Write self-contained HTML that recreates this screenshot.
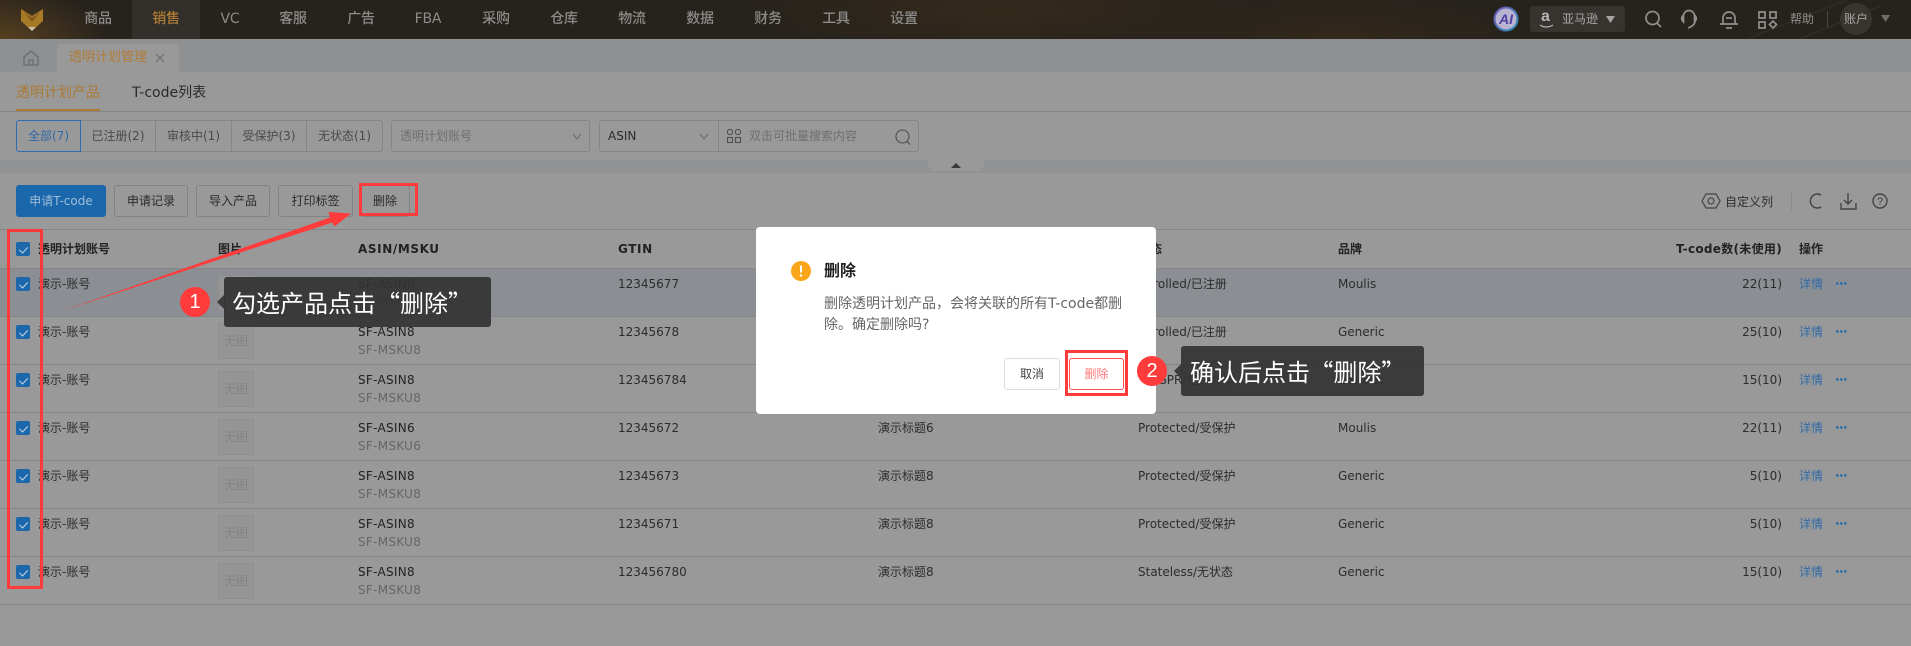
<!DOCTYPE html>
<html lang="zh"><head><meta charset="utf-8"><title>透明计划管理</title>
<style>
*{box-sizing:border-box;margin:0;padding:0}
html,body{width:1911px;height:646px;overflow:hidden;background:#999}
body{position:relative;font:12px/16px "DejaVu Sans","Noto Sans CJK SC",sans-serif;color:#2a2a2a}
.a,.a>*{position:absolute;white-space:nowrap}
.nav{left:0;top:0;width:1911px;height:39px;background:radial-gradient(ellipse 110px 60px at 0 45px,#5c4220,transparent),radial-gradient(ellipse 260px 50px at 1000px 10px,#352a1c,transparent),radial-gradient(ellipse 200px 50px at 1340px 40px,#33281b,transparent),#26221c}
.nav b{top:11px;width:68px;text-align:center;font:500 14px/17px "DejaVu Sans","Noto Sans CJK SC",sans-serif;color:#8c8c8a;letter-spacing:-.2px}
.seg{top:120px;height:32px;border:1px solid #858585;border-left:0;text-align:center;line-height:30px;color:#4a4a4a}
.inp{top:120px;height:32px;border:1px solid #858585;border-radius:3px}
.btn{top:185px;height:32px;border:1px solid #828282;border-radius:3px;text-align:center;line-height:30px;color:#2a2a2a}
.line{left:0;width:1911px;height:1px;background:#858585}
.th{top:241px;font-weight:700;color:#222}
.row{left:0;width:1911px;height:48px}
.row>i{left:0;bottom:-1px;width:1911px;height:1px;background:#858585}
.cb{left:16px;top:9px;width:14px;height:14px;background:#1d68ab;border-radius:2px}
.cb::after{content:"";position:absolute;left:5px;top:2.5px;width:4px;height:7px;border:solid #c9d6e2;border-width:0 1.6px 1.6px 0;transform:rotate(42deg)}
.t{top:8px;color:#2c2c2c}
.acc{left:38px}.asin{left:358px;color:#222;letter-spacing:.3px}.sku{left:358px;top:26px;color:#666;letter-spacing:.3px}
.g{left:618px}.ti{left:878px}.st{left:1138px}.br{left:1338px}
.n{right:129px}.op{left:1799px;color:#2f6aa8!important}
.more{left:1836px;top:14px;width:12px;height:3px;background:radial-gradient(circle at 1.3px 1.5px,#1f6cb0 1.2px,transparent 1.4px) 0 0/4px 3px repeat-x}
.img{left:218px;top:7px;width:36px;height:36px;background:#959595;border:1px solid #8f8f8f;text-align:center;line-height:34px;color:#838383}
</style></head><body>

<div class="a nav">
<svg style="left:1700px;top:0" width="211" height="39" fill="none" stroke="#302d28" stroke-width="1.500"><path d="M47 39 147 0M100 39 180 6"/></svg>
<svg style="left:0;top:0" width="64" height="39"><path d="M21 9 32 16 43 9V21L32 31 21 21Z" fill="#a87a28"/><path d="M24 12 32 18 40 12 32 22Z" fill="#80591a"/><path d="M28 27h8l-4 4z" fill="#c9c3b4"/></svg>
<div style="left:132px;top:0;width:68px;height:39px;background:#33302b"></div>
<b style="left:64px">商品</b><b style="left:132px;color:#b07c35">销售</b><b style="left:196px">VC</b><b style="left:259px">客服</b><b style="left:327px">广告</b><b style="left:394px">FBA</b><b style="left:462px">采购</b><b style="left:530px">仓库</b><b style="left:598px">物流</b><b style="left:666px">数据</b><b style="left:734px">财务</b><b style="left:802px">工具</b><b style="left:870px">设置</b>
<svg style="left:1493px;top:6px" width="26" height="26"><defs><linearGradient id="ai" x1="0" y1="0" x2="1" y2="1"><stop offset="0" stop-color="#6d55b5"/><stop offset="1" stop-color="#2b8fb5"/></linearGradient></defs><circle cx="13" cy="13" r="11.500" fill="#b9b4d2" stroke="url(#ai)" stroke-width="2"/><text x="13" y="18" text-anchor="middle" font-family="Liberation Sans" font-size="14" font-weight="700" font-style="italic" fill="#4f3fa3">AI</text></svg>
<div style="left:1530px;top:6px;width:95px;height:26px;background:#37342f;border-radius:3px"></div>
<span style="left:1541px;top:8px;font:700 16px/18px 'Liberation Sans',sans-serif;color:#b5b5b3">a</span>
<svg style="left:1539px;top:24px" width="16" height="6"><path d="M1 1q6 4 13 0" fill="none" stroke="#b5b5b3" stroke-width="1.200"/></svg>
<span style="left:1562px;top:11px;color:#a9a9a7">亚马逊</span>
<svg style="left:1606px;top:16px" width="10" height="8"><path d="M0 0h9L4.500 7z" fill="#a5a5a3"/></svg>
<svg style="left:1640px;top:6px" width="140" height="28" fill="none" stroke="#8f8f8d" stroke-width="1.700">
<circle cx="12.500" cy="12" r="6.500"/><path d="M17 17l4 4"/>
<path d="M43.500 10a5.500 5.500 0 0 1 11 0M43.500 9q-3.500 3.500 0 7zM54.500 9q3.500 3.500 0 7zM55 16q-1 4-7 6"/>
<path d="M83 18v-6a6 6 0 0 1 12 0v6M80 18h18M86 22h6M86 12h6"/>
<path d="M119 6h6v6h-6zM130 6h6v6h-6zM119 16h6v6h-6zM133 15l3.500 3.500-3.500 3.500-3.500-3.500z"/>
</svg>
<span style="left:1790px;top:11px;color:#8f8f8d">帮助</span>
<div style="left:1827px;top:11px;width:1px;height:16px;background:#4a4742"></div>
<div style="left:1840px;top:3px;width:32px;height:32px;border-radius:50%;background:#38352f"></div>
<span style="left:1844px;top:11px;color:#a5a5a3">账户</span>
<svg style="left:1881px;top:15px" width="10" height="8"><path d="M0 0h9L4.500 7z" fill="#6f6e6b"/></svg>
</div>

<div class="a" style="left:0;top:39px;width:1911px;height:33px;background:#8f9092"></div>
<svg class="a" style="left:22px;top:49px" width="18" height="18" fill="none" stroke="#6f7072" stroke-width="1.500"><path d="M2 8 9 2l7 6v8H2zM7 16v-5h4v5"/></svg>
<div class="a" style="left:57px;top:44px;width:122px;height:28px;background:#999;border-radius:3px 3px 0 0"></div>
<span class="a" style="left:69px;top:50px;font-size:13px;color:#b07c38">透明计划管理</span>
<svg class="a" style="left:155px;top:53px" width="10" height="10" stroke="#6e6e6e" stroke-width="1.100"><path d="M1 1l8 8M9 1 1 9"/></svg>

<span class="a" style="left:16px;top:84px;font-size:14px;line-height:18px;color:#ab7a36">透明计划产品</span>
<span class="a" style="left:132px;top:84px;font-size:14px;line-height:18px;color:#2a2a2a">T-code列表</span>
<div class="a" style="left:16px;top:109px;width:84px;height:2px;background:#ad7b33"></div>
<div class="a line" style="top:111px"></div>

<div class="a seg" style="left:16px;width:65px;border:1px solid #2d6fae;border-radius:3px 0 0 3px;color:#2f6aa8">全部(7)</div>
<div class="a seg" style="left:81px;width:75px">已注册(2)</div>
<div class="a seg" style="left:156px;width:76px">审核中(1)</div>
<div class="a seg" style="left:232px;width:75px">受保护(3)</div>
<div class="a seg" style="left:307px;width:76px;border-radius:0 3px 3px 0">无状态(1)</div>

<div class="a inp" style="left:391px;width:199px"></div>
<span class="a" style="left:400px;top:128px;color:#707070">透明计划账号</span>
<svg class="a" style="left:571px;top:133px" width="12" height="8" fill="none" stroke="#666" stroke-width="1"><path d="M2 1l4 5 4-5"/></svg>
<div class="a inp" style="left:599px;width:320px"></div>
<span class="a" style="left:608px;top:128px;color:#2a2a2a">ASIN</span>
<svg class="a" style="left:698px;top:133px" width="12" height="8" fill="none" stroke="#666" stroke-width="1"><path d="M2 1l4 5 4-5"/></svg>
<div class="a" style="left:718px;top:120px;width:1px;height:32px;background:#858585"></div>
<svg class="a" style="left:726px;top:128px" width="16" height="16" fill="none" stroke="#4f4f4f" stroke-width="1.100"><rect x="1.500" y="1.500" width="5" height="5" rx="2"/><rect x="9.500" y="1.500" width="5" height="5" rx="2"/><rect x="1.500" y="9.500" width="5" height="5"/><rect x="9.500" y="9.500" width="5" height="5"/></svg>
<span class="a" style="left:749px;top:128px;color:#707070">双击可批量搜索内容</span>
<svg class="a" style="left:894px;top:128px" width="18" height="18" fill="none" stroke="#4f4f4f" stroke-width="1.100"><circle cx="8.500" cy="8.500" r="6.500"/><path d="M13 13.500l3 3"/></svg>

<div class="a" style="left:0;top:160px;width:1911px;height:13px;background:#919294"></div>
<svg class="a" style="left:926px;top:160px" width="60" height="12"><path d="M1 0h58l-2 8q-1 3-4 3H7q-3 0-4-3z" fill="#999"/><path d="M25 8l5-5 5 5z" fill="#3a3a3a"/></svg>

<div class="a btn" style="left:16px;width:90px;background:#1b67ab;border-color:#1b67ab;color:#9dbdd8">申请T-code</div>
<div class="a btn" style="left:114px;width:74px">申请记录</div>
<div class="a btn" style="left:196px;width:74px">导入产品</div>
<div class="a btn" style="left:278px;width:75px">打印标签</div>
<div class="a btn" style="left:360px;width:50px">删除</div>

<svg class="a" style="left:1700px;top:190px" width="22" height="22" fill="none" stroke="#444" stroke-width="1.200"><path d="M5 3.500h10l4 7-4 7H5l-4-7z" transform="translate(1 .5)"/><circle cx="11" cy="11" r="3"/></svg>
<span class="a" style="left:1725px;top:194px;color:#2c2c2c">自定义列</span>
<div class="a" style="left:1791px;top:192px;width:1px;height:18px;background:#8a8a8a"></div>
<svg class="a" style="left:1805px;top:190px" width="90" height="22" fill="none" stroke="#444" stroke-width="1.400">
<path d="M16 5a7 7 0 1 0 0 12"/>
<path d="M43 3v11M39 10l4 4 4-4M36 13v6h15v-6"/>
<circle cx="75" cy="11" r="7"/><text x="75" y="15" text-anchor="middle" font-size="11" fill="#444" stroke="none" font-family="Liberation Sans">?</text>
</svg>

<div class="a line" style="top:229px"></div>
<div class="a row" style="top:229px;height:39px"><div class="cb" style="top:13px"></div></div>
<span class="a th" style="left:38px">透明计划账号</span>
<span class="a th" style="left:218px">图片</span>
<span class="a th" style="left:358px;letter-spacing:.6px">ASIN/MSKU</span>
<span class="a th" style="left:618px;letter-spacing:.6px">GTIN</span>
<span class="a th" style="left:1138px">状态</span>
<span class="a th" style="left:1338px">品牌</span>
<span class="a th" style="right:129px;letter-spacing:.3px">T-code数(未使用)</span>
<span class="a th" style="left:1799px">操作</span>

<div class="a row" style="top:268px;background:#8b8e93"><div class="cb"></div><span class="t acc">演示-账号</span><div class="img">无图</div><span class="t asin">SF-ASIN6</span><span class="sku">SF-MSKU6</span><span class="t g">12345677</span><span class="t ti">演示标题6</span><span class="t st">Enrolled/已注册</span><span class="t br">Moulis</span><span class="t n">22(11)</span><span class="t op">详情</span><span class="more"></span><i></i></div>
<div class="a row" style="top:316px"><div class="cb"></div><span class="t acc">演示-账号</span><div class="img">无图</div><span class="t asin">SF-ASIN8</span><span class="sku">SF-MSKU8</span><span class="t g">12345678</span><span class="t ti">演示标题8</span><span class="t st">Enrolled/已注册</span><span class="t br">Generic</span><span class="t n">25(10)</span><span class="t op">详情</span><span class="more"></span><i></i></div>
<div class="a row" style="top:364px"><div class="cb"></div><span class="t acc">演示-账号</span><div class="img">无图</div><span class="t asin">SF-ASIN8</span><span class="sku">SF-MSKU8</span><span class="t g">123456784</span><span class="t ti">演示标题8</span><span class="t st">Ex-GPR/在线样本</span><span class="t br">Generic</span><span class="t n">15(10)</span><span class="t op">详情</span><span class="more"></span><i></i></div>
<div class="a row" style="top:412px"><div class="cb"></div><span class="t acc">演示-账号</span><div class="img">无图</div><span class="t asin">SF-ASIN6</span><span class="sku">SF-MSKU6</span><span class="t g">12345672</span><span class="t ti">演示标题6</span><span class="t st">Protected/受保护</span><span class="t br">Moulis</span><span class="t n">22(11)</span><span class="t op">详情</span><span class="more"></span><i></i></div>
<div class="a row" style="top:460px"><div class="cb"></div><span class="t acc">演示-账号</span><div class="img">无图</div><span class="t asin">SF-ASIN8</span><span class="sku">SF-MSKU8</span><span class="t g">12345673</span><span class="t ti">演示标题8</span><span class="t st">Protected/受保护</span><span class="t br">Generic</span><span class="t n">5(10)</span><span class="t op">详情</span><span class="more"></span><i></i></div>
<div class="a row" style="top:508px"><div class="cb"></div><span class="t acc">演示-账号</span><div class="img">无图</div><span class="t asin">SF-ASIN8</span><span class="sku">SF-MSKU8</span><span class="t g">12345671</span><span class="t ti">演示标题8</span><span class="t st">Protected/受保护</span><span class="t br">Generic</span><span class="t n">5(10)</span><span class="t op">详情</span><span class="more"></span><i></i></div>
<div class="a row" style="top:556px"><div class="cb"></div><span class="t acc">演示-账号</span><div class="img">无图</div><span class="t asin">SF-ASIN8</span><span class="sku">SF-MSKU8</span><span class="t g">123456780</span><span class="t ti">演示标题8</span><span class="t st">Stateless/无状态</span><span class="t br">Generic</span><span class="t n">15(10)</span><span class="t op">详情</span><span class="more"></span><i></i></div>
<div class="a line" style="top:268px"></div>

<!-- dialog -->
<div class="a" style="left:756px;top:227px;width:400px;height:187px;background:#fff;border-radius:4px"></div>
<svg class="a" style="left:791px;top:261px" width="20" height="20"><circle cx="10" cy="10" r="10" fill="#faa61a"/><path d="M10 4.500v7" stroke="#fff" stroke-width="2"/><circle cx="10" cy="14.500" r="1.200" fill="#fff"/></svg>
<span class="a" style="left:824px;top:262px;font-size:16px;line-height:18px;font-weight:700;color:#222">删除</span>
<div class="a" style="left:824px;top:294px;font-size:14px;line-height:21px;color:#666">删除透明计划产品，会将关联的所有T-code都删<br>除。确定删除吗?</div>
<div class="a" style="left:1004px;top:358px;width:56px;height:32px;border:1px solid #ddd;border-radius:3px;text-align:center;line-height:30px;color:#444">取消</div>
<div class="a" style="left:1069px;top:358px;width:55px;height:32px;border:1px solid #ff4d4f;border-radius:3px;text-align:center;line-height:30px;color:#ff7a7a">删除</div>

<!-- annotations -->
<div class="a" style="left:1065px;top:350px;width:63px;height:46px;border:3px solid #ff3b3b"></div>
<div class="a" style="left:359px;top:183px;width:59px;height:33px;border:3px solid #ff3b3b"></div>
<div class="a" style="left:7px;top:229px;width:36px;height:360px;border:3px solid #ff3b3b"></div>
<svg class="a" style="left:0;top:0;overflow:visible" width="400" height="330"><path d="M62 311 330 217.500 328.500 212 351 213.500 334.500 226.500 332.300 222.500Z" fill="#ff3b3b"/></svg>

<div class="a" style="left:180px;top:287px;width:30px;height:30px;border-radius:50%;background:#ff3b3b;color:#fff;font:20px/30px 'Liberation Sans',sans-serif;text-align:center">1</div>
<svg class="a" style="left:216px;top:294px" width="9" height="16"><path d="M9 0v16L1 8z" fill="#3d3d3d"/></svg>
<div class="a" style="left:224px;top:277px;width:267px;height:50px;background:rgba(51,51,51,.92);border-radius:3px;color:#fff;font:24px/50px 'Noto Sans CJK SC',sans-serif;padding-left:8px">勾选产品点击“删除”</div>

<div class="a" style="left:1137px;top:356px;width:30px;height:30px;border-radius:50%;background:#ff3b3b;color:#fff;font:20px/30px 'Liberation Sans',sans-serif;text-align:center">2</div>
<svg class="a" style="left:1173px;top:363px" width="9" height="16"><path d="M9 0v16L1 8z" fill="#3d3d3d"/></svg>
<div class="a" style="left:1181px;top:346px;width:243px;height:50px;background:rgba(51,51,51,.92);border-radius:3px;color:#fff;font:24px/50px 'Noto Sans CJK SC',sans-serif;padding-left:9px;word-spacing:-6px">确认后点击 “删除”</div>
</body></html>
